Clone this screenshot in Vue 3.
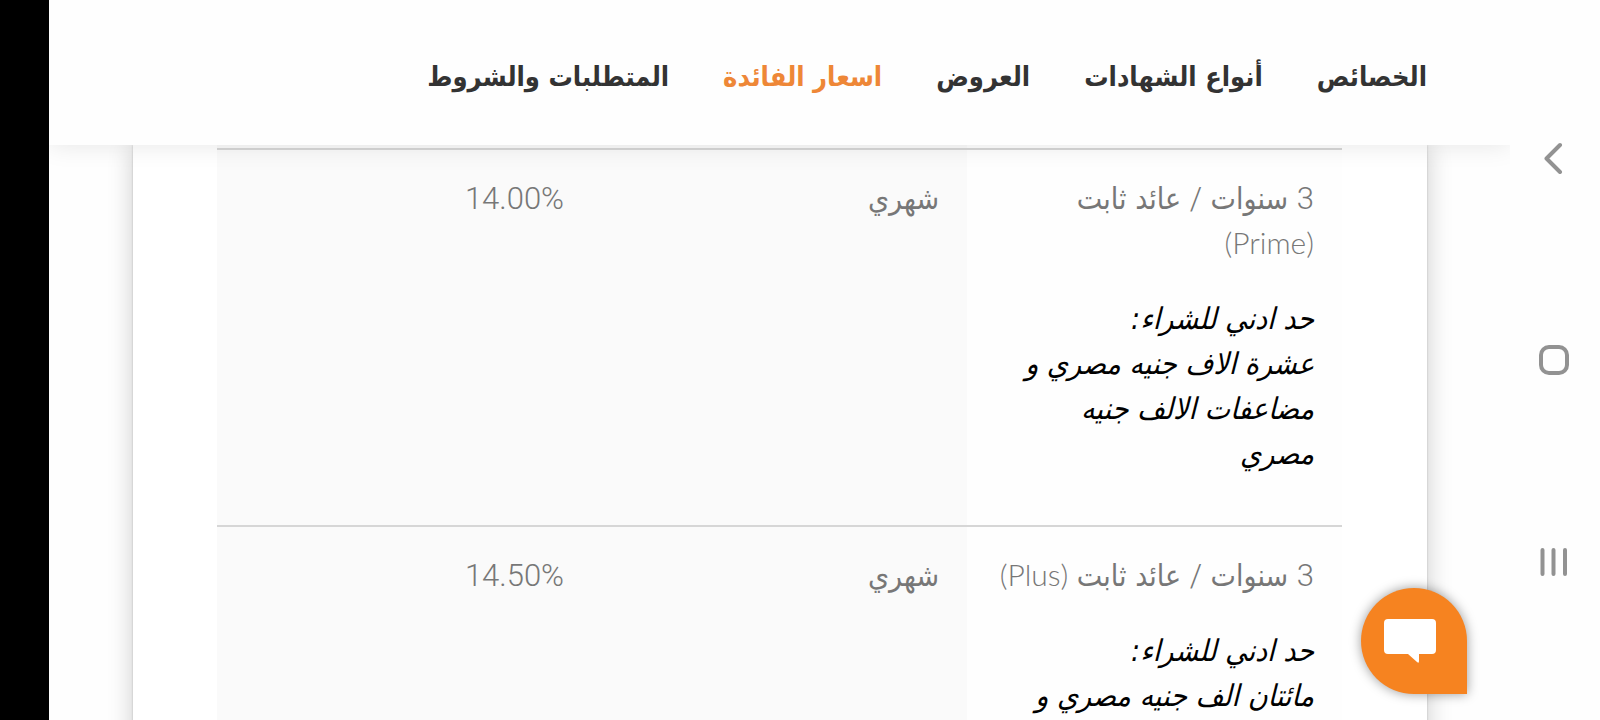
<script setup>
const links = [
  { text: 'الخصائص' },
  { text: 'أنواع الشهادات' },
  { text: 'العروض' },
  { text: 'اسعار الفائدة', active: true },
  { text: 'المتطلبات والشروط' },
]
const rows = [
  {
    name: 'عائد ثابت',
    plan: '(Prime)',
    wrapPlan: true,
    lines: ['حد ادني للشراء:', 'عشرة الاف جنيه مصري و', 'مضاعفات الالف جنيه', 'مصري'],
    period: 'شهري',
    rate: '14.00%',
  },
  {
    name: 'عائد ثابت',
    plan: '(Plus)',
    wrapPlan: false,
    lines: ['حد ادني للشراء:', 'مائتان الف جنيه مصري و'],
    period: 'شهري',
    rate: '14.50%',
  },
]
</script>

<template>
  <div class="screen">
    <div class="cutout"></div>
    <main class="page" dir="rtl" lang="ar">
      <nav class="tabs">
        <a v-for="l in links" :key="l.text" href="#" :class="{ active: l.active }">{{ l.text }}</a>
      </nav>
      <section class="card">
        <table>
          <tbody>
            <tr class="prev"><td></td><td></td><td></td></tr>
            <tr v-for="r in rows" :key="r.plan">
              <td>
                <p class="name">
                  <span class="latin">3</span> سنوات <span class="latin">/</span> {{ r.name }}
                  <br v-if="r.wrapPlan"><bdi class="latin plan" dir="ltr">{{ r.plan }}</bdi>
                </p>
                <p class="terms">
                  <template v-for="(t, i) in r.lines" :key="i"><br v-if="i">{{ t }}</template>
                </p>
              </td>
              <td>{{ r.period }}</td>
              <td><bdi class="latin" dir="ltr">{{ r.rate }}</bdi></td>
            </tr>
          </tbody>
        </table>
      </section>
      <button class="chat" type="button" aria-label="محادثة">
        <svg width="52" height="45" viewBox="0 0 52 45" aria-hidden="true">
          <path fill="#fff" d="M4 0H48Q52 0 52 4V31Q52 35 48 35H35V42Q35 45 33 43L24 35H4Q0 35 0 31V4Q0 0 4 0Z" />
        </svg>
      </button>
    </main>
    <div class="system">
      <button type="button" aria-label="Back">
        <svg width="32" height="32" viewBox="0 0 32 32"><path d="M22 3 8.500 16.500 22 30" /></svg>
      </button>
      <button type="button" aria-label="Home">
        <svg width="32" height="32" viewBox="0 0 32 32"><rect x="3" y="3" width="26" height="26" rx="8" /></svg>
      </button>
      <button type="button" aria-label="Recent apps">
        <svg width="32" height="32" viewBox="0 0 32 32"><path d="M4.500 4V28M15.500 4V28M27 4V28" /></svg>
      </button>
    </div>
  </div>
</template>

<style>
body { background: #fefefe; }
</style>

<style scoped>
.screen {
  display: flex;
  height: 100vh;
  overflow: hidden;
  background: #fefefe;
  font-family: "DejaVu Sans Condensed", "DejaVu Sans", sans-serif;
}
.cutout { width: 49px; background: #000; }
.page {
  position: relative;
  flex: 1;
  min-width: 0;
  overflow: hidden;
}
.tabs {
  position: relative;
  z-index: 1;
  display: flex;
  gap: 54px;
  box-sizing: border-box;
  height: 145px;
  padding: 54px 83px 0;
  background: #fefefe;
  box-shadow: 0 0 24px rgba(0, 0, 0, 0.1);
}
.tabs a {
  color: #333;
  font-size: 27px;
  font-weight: 700;
  line-height: 45px;
  text-decoration: none;
  white-space: nowrap;
}
.tabs a.active { color: #ee8737; }
.card {
  margin: 0 83px 0 84px;
  padding: 0 85px 0 84px;
  background: #fff;
  box-shadow: 0 0 24px rgba(0, 0, 0, 0.2), 0 0 2px rgba(0, 0, 0, 0.2);
}
table {
  width: 100%;
  table-layout: fixed;
  border-collapse: separate;
  border-spacing: 0;
}
td {
  padding: 26px 28px 49px;
  border-top: 2px solid #d6d6d6;
  background: #fafafa;
  color: #777;
  font-size: 30px;
  line-height: 45px;
  text-align: right;
  vertical-align: top;
  white-space: nowrap;
}
td:first-child { background: #fefefe; }
.prev td { height: 3px; padding: 0; border: 0; }
p { margin: 0; }
.latin {
  font-family: Roboto, "Liberation Sans", sans-serif;
  font-size: 31px;
  font-weight: 300;
  line-height: 1;
}
.latin.plan {
  font-family: Lato, Roboto, sans-serif;
  font-size: 30px;
}
.terms {
  margin-top: 30px;
  color: #000;
  font-style: italic;
}
.chat {
  position: absolute;
  right: 43px;
  bottom: 26px;
  width: 106px;
  height: 106px;
  padding: 0 8px 0 0;
  border: 0;
  border-radius: 53px 53px 0 53px;
  background: #f68320;
  box-shadow: 0 0 12px rgba(0, 0, 0, 0.4);
}
.chat svg { display: block; margin: 0 auto; }
.system {
  display: flex;
  flex-direction: column;
  align-items: center;
  justify-content: center;
  gap: 170px;
  width: 88px;
  padding-right: 2px;
  background: #fefefe;
}
.system button { padding: 0; border: 0; background: none; }
.system svg {
  display: block;
  fill: none;
  stroke: #929292;
  stroke-width: 4px;
  stroke-linecap: round;
  stroke-linejoin: round;
}
</style>
